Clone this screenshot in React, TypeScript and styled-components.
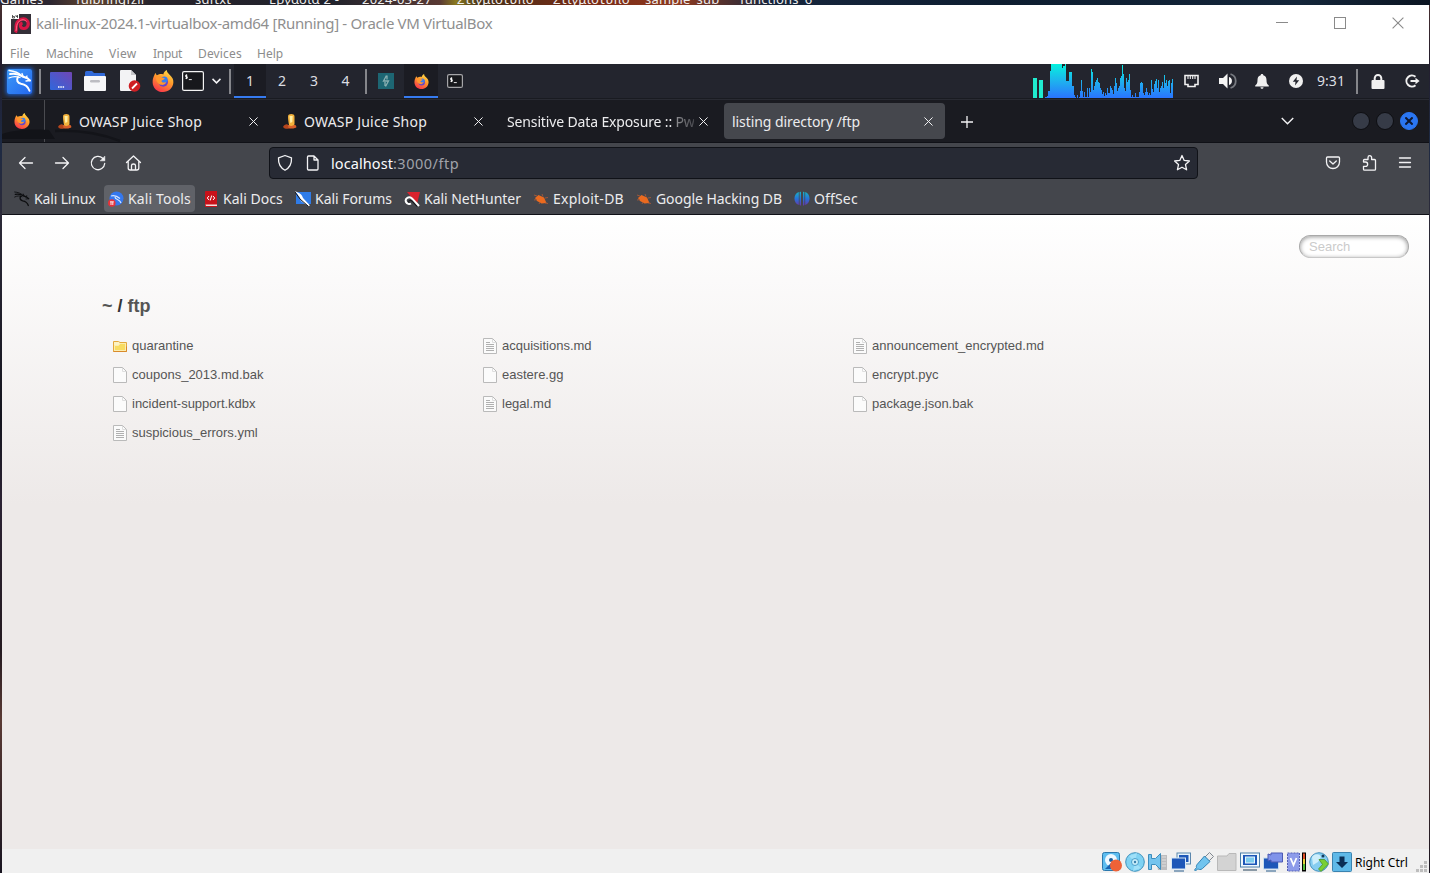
import React from 'react';
import styled, { createGlobalStyle, css } from 'styled-components';

const Global = createGlobalStyle`
  * { box-sizing: border-box; }
  html, body { margin: 0; height: 873px; overflow: hidden; }
  body { font-family: "Noto Sans", sans-serif; }
  svg { display: block; flex: none; }
`;

/* ---------- host desktop and window ---------- */

const Desktop = styled.div`
  position: relative;
  width: 1430px;
  height: 873px;
  padding: 5px 1px 0 2px;
  overflow: hidden;
  background:
    linear-gradient(90deg, #2c2630 0 50px, #62452f 90px, #27232b 150px, #20222c 330px, #5a3a34 440px, #8a7a20 456px, #463018 480px, #7a2b16 590px, #8d3a20 680px, #17263d 770px, #0d1d30 1000px, #14263a 1300px, #0b1522 1430px) 0 0 / 1430px 5px no-repeat,
    linear-gradient(180deg, #4a3030 0, #241d2c 60px, #1d2a44 140px, #2c2a38 220px, #14141e 420px, #2b2233 500px, #241a20 650px, #5a3a34 720px, #181420 873px);
`;

const DesktopLabel = styled.span<{ $x: number }>`
  position: absolute;
  top: -9px;
  left: ${p => p.$x}px;
  font-size: 13px;
  line-height: 17px;
  letter-spacing: 0.2px;
  white-space: nowrap;
  color: #eeeeee;
`;

const Window = styled.div`
  position: relative;
  display: flex;
  flex-direction: column;
  height: 868px;
  background: #ffffff;
`;

const TitleBar = styled.header`
  display: flex;
  align-items: center;
  height: 37px;
  padding-left: 9px;
`;

const WindowTitle = styled.h1`
  flex: 1;
  margin: 0 0 1px 5px;
  font-size: 15px;
  font-weight: 400;
  letter-spacing: -0.33px;
  color: #8f8f8f;
`;

const CaptionButtons = styled.div`
  display: flex;
  gap: 46px;
  padding: 0 25px 1px 0;
`;

const MenuBar = styled.nav`
  display: flex;
  height: 22px;
  padding-left: 8px;
  font-size: 12px;
  line-height: 24px;
  color: #8c8c8c;
`;

const MenuItem = styled.span<{ $w: number; $track?: number }>`
  width: ${p => p.$w}px;
  letter-spacing: ${p => p.$track ?? 0}px;
`;

/* ---------- guest panel ---------- */

const Panel = styled.div`
  display: flex;
  align-items: stretch;
  height: 35px;
  background: #23252e;
  border-bottom: 1px solid #191b21;
`;

const Cell = styled.div<{ $w: number; $active?: boolean; $text?: boolean }>`
  display: flex;
  align-items: center;
  justify-content: center;
  width: ${p => p.$w}px;
  padding-bottom: ${p => (p.$text ? 2 : 0)}px;
  font-size: 14px;
  color: #dcdee2;
  ${p => p.$active && css`
    background: #1b1c23;
    box-shadow: inset 0 -2px 0 #367bf0;
  `}
`;

const PanelSeparator = styled.i<{ $l?: number; $r?: number }>`
  width: 2px;
  height: 25px;
  margin: 5px ${p => p.$r ?? 0}px 0 ${p => p.$l ?? 0}px;
  background: #85868b;
`;

const Spacer = styled.div`
  flex: 1;
`;

/* ---------- browser chrome ---------- */

const TabStrip = styled.div`
  position: relative;
  display: flex;
  align-items: center;
  height: 44px;
  padding-bottom: 1px;
  background: #1a1b21;
  border-top: 1px solid #292b33;
  border-bottom: 1px solid #101117;
`;

const StripShade = styled.svg`
  position: absolute;
  left: 0;
  bottom: 0;
`;

const PinnedTab = styled.div`
  display: flex;
  align-items: center;
  justify-content: center;
  align-self: stretch;
  width: 43px;
  margin-right: 4px;
  margin-bottom: -1px;
  padding-right: 2px;
  border-right: 1px solid #4a4b50;
`;

const TabBox = styled.div<{ $active?: boolean }>`
  display: flex;
  align-items: center;
  width: 221px;
  height: 36px;
  margin-right: 4px;
  padding: 2px 12px 0 8px;
  gap: 5px;
  border-radius: 4px;
  font-size: 14px;
  color: #ececee;
  ${p => p.$active && css`background: #45474d;`}
`;

const TabTitle = styled.span<{ $track?: number; $fade?: boolean }>`
  flex: 1;
  min-width: 0;
  overflow: hidden;
  white-space: nowrap;
  letter-spacing: ${p => p.$track ?? 0}px;
  ${p => p.$fade && css`
    mask-image: linear-gradient(90deg, #000 165px, rgba(0, 0, 0, 0.55) 169px, rgba(0, 0, 0, 0.15) 191px);
  `}
`;

const TabIcon = styled.span`
  width: 17px;
  padding: 0 0 2px 1px;
`;

const NewTab = styled.button`
  display: grid;
  place-items: center;
  width: 34px;
  height: 34px;
  padding: 2px 0 0 2px;
  border: 0;
  background: none;
`;

const TabListButton = styled.span`
  padding-top: 1px;
`;

const WindowDots = styled.div`
  display: flex;
  gap: 6px;
  margin: 0 11px 0 58px;
`;

const Dot = styled.span<{ $close?: boolean }>`
  display: grid;
  place-items: center;
  width: 18px;
  height: 18px;
  border-radius: 50%;
  background: ${p => (p.$close ? '#2a76f2' : '#363b47')};
  border: 1px solid ${p => (p.$close ? '#2a76f2' : '#0d0e12')};
`;

const NavBar = styled.div`
  display: flex;
  align-items: center;
  height: 40px;
  padding: 0 14px;
  background: #44464c;
`;

const NavButtons = styled.div`
  display: flex;
  gap: 16px;
  width: 253px;
`;

const UrlField = styled.div`
  display: flex;
  align-items: center;
  width: 929px;
  height: 32px;
  padding: 0 5px;
  gap: 8px;
  border: 1px solid #101218;
  border-radius: 4px;
  background: #272a34;
`;

const UrlText = styled.span`
  flex: 1;
  font-size: 14.5px;
  color: #fbfbfe;
`;

const UrlHost = styled.span`
  letter-spacing: 0.08px;
`;

const UrlPath = styled.span`
  letter-spacing: 0.5px;
  color: #a0a2a9;
`;

const NavTools = styled.div`
  display: flex;
  gap: 16px;
  margin-left: auto;
`;

const Bookmarks = styled.div`
  display: flex;
  align-items: flex-start;
  gap: 4px;
  height: 32px;
  padding: 2px 8px 0;
  background: #44464c;
  border-bottom: 1px solid #101117;
`;

const Bookmark = styled.a<{ $w: number; $track?: number; $hover?: boolean }>`
  display: flex;
  align-items: center;
  gap: 4px;
  width: ${p => p.$w}px;
  height: 27px;
  padding-left: 4px;
  border-radius: 4px;
  white-space: nowrap;
  font-size: 14px;
  letter-spacing: ${p => p.$track ?? 0}px;
  color: #ececee;
  background: ${p => (p.$hover ? '#606268' : 'transparent')};
`;

/* ---------- directory listing page ---------- */

const Page = styled.main`
  position: relative;
  flex: 1;
  padding: 79px 100px;
  font: 13px "Liberation Sans", Arial, sans-serif;
  color: #555555;
  background: #ede9e8 linear-gradient(180deg, #ffffff, #ede9e8) 0 0 / 100% 290px no-repeat;
`;

const SearchField = styled.input`
  position: absolute;
  top: 20px;
  right: 20px;
  width: 110px;
  height: 23px;
  padding: 0 9px;
  border: 1px solid #a9a9a9;
  border-bottom-color: #c8c8c8;
  border-radius: 12px;
  font: inherit;
  background: #ffffff;
  box-shadow: inset 0 1px 4px rgba(0, 0, 0, 0.4);
  &::placeholder { color: #cbcbcb; opacity: 1; }
`;

const Path = styled.h2`
  margin: 0;
  font-size: 18px;
  line-height: 24px;
  color: #343434;
`;

const Crumb = styled.a`
  color: #555555;
`;

const FileGrid = styled.ul`
  display: grid;
  grid-template-columns: repeat(3, 370px);
  grid-auto-rows: 29px;
  margin: 13px 0 0;
  padding: 0 0 0 10px;
  list-style: none;
`;

const FileRow = styled.li`
  display: flex;
  align-items: center;
  gap: 4px;
`;

/* ---------- status bar ---------- */

const StatusBar = styled.footer`
  display: flex;
  align-items: center;
  justify-content: flex-end;
  height: 24px;
  padding: 2px 1px 0 0;
  gap: 3px;
  font-size: 12px;
  color: #000000;
  background: #f0f0f0;
`;

const HostKey = styled.span`
  width: 58px;
`;

const ResizeGrip = styled.svg`
  align-self: flex-end;
`;

/* ---------- icons ---------- */

const Firefox = ({ size }: { size: number }) => (
  <svg width={size} height={size} viewBox="0 0 24 24">
    <defs>
      <linearGradient id="ffFlame" x1="0.8" y1="0" x2="0.3" y2="1">
        <stop offset="0" stopColor="#ffe14a" />
        <stop offset="0.45" stopColor="#ff9a2b" />
        <stop offset="1" stopColor="#f8354b" />
      </linearGradient>
    </defs>
    <path fill="url(#ffFlame)" d="M2.6 5.4c.4-.9.8-1.500 1.500-2 .1 1 .5 1.700 1.200 2.400C8 4.200 10.500 4 12.300 4.800 12.800 2.700 14.200 1 16.200 0c-.2 2.200 1.300 3.400 3 5.200C22.300 8 23.600 10.500 23.300 14 22.700 20 18 24 12 24 5.600 24 .9 19.500.7 13.500.6 10.300 1.400 7.800 2.600 5.400z" />
    <circle cx="12.300" cy="13" r="5.200" fill="#6845c9" />
    <circle cx="13.500" cy="10.600" r="3.500" fill="#367ff0" />
    <path fill="#ff982e" d="M4.500 7.500c2.500-1.500 5-.8 6.500.8l3 .6c-.4 1.500-1.900 1.700-3 2.300-.9.500-.7 1.700.3 2.100 1.400.7 2.700-.3 4.200 0-1 2.200-3.300 3.400-5.700 2.800C6.300 15.200 4 11.800 4.500 7.500z" />
  </svg>
);

const Juice = () => (
  <svg width="14" height="16" viewBox="0 0 14 16">
    <path fill="#b6451c" d="M0 14c1-2 3-3 4.500-2.500L8 15l-3 .8c-2 .2-4-.3-5-1.800z" />
    <path fill="#d9602a" d="M5 12h7.500l1 2c-1 1.500-5 2-8 1z" />
    <path fill="#f3b23c" d="M5 3.500c0-3.200 6.500-3.200 6.500 0v8c-1.500 1.500-4 2-5.500.5C5.500 9 5 6 5 3.500z" />
    <path fill="#fff0a5" d="M6.500 3h3.200l-.4 6-2 1z" />
  </svg>
);

const Cross = ({ size = 9, color = '#f3f3f5', width = 1.1 }: { size?: number; color?: string; width?: number }) => (
  <svg width={size} height={size} viewBox="0 0 10 10" stroke={color} strokeWidth={width}>
    <path d="M.5.5l9 9M9.500.5l-9 9" />
  </svg>
);

const Dragon = ({ size, color }: { size: number; color: string }) => (
  <svg width={size} height={size} viewBox="0 0 24 24" fill="none" stroke={color} strokeLinecap="round">
    <path strokeWidth="2" d="M2 5c5-1 9 0 12.500 2.500L19 9l3 2.500M10 8c-2 3-.5 6 3 6.700 4 .6 7 2.500 8.500 7" />
    <path strokeWidth="1.300" d="M1 1.500C6 2 10 3 14 7M1 9c4-2 7-2 11-.5M15 7l-1-2.500M18 9l1-2M22 11.500l-4 .5" />
  </svg>
);

const KaliMenuTile = styled.span`
  display: grid;
  place-items: center;
  width: 25px;
  height: 25px;
  border-radius: 2px;
  background: linear-gradient(135deg, #3c9af8, #2467ee);
  box-shadow: 0 0 4px 1px #1c63d8;
`;

const GuestOs = () => (
  <svg width="20" height="20" viewBox="0 0 20 20">
    <rect width="20" height="20" fill="#342f38" />
    <path d="M4.500 18.500c1.500-2.500 0-5 1-8.500C7 5.500 13 3 16 6.500c2.500 3 1 7.500-3 8-4 .3-5-4.500-1.500-5.500" fill="none" stroke="#d81545" strokeWidth="3.200" />
    <path d="M5 17c.8-3 .3-5 1.500-7.500C8.500 5.500 13 4.500 15.500 7.500" fill="none" stroke="#ff6a86" strokeWidth="1" />
    <rect width="8" height="5" fill="#ffffff" />
    <path d="M1.500 1v3h2v-1.500h-2M5 1v1.500h2M6.500 1v3" stroke="#3a3a3a" strokeWidth=".8" fill="none" />
  </svg>
);

const DesktopIcon = () => (
  <svg width="22" height="18" viewBox="0 0 22 18">
    <defs>
      <linearGradient id="desk" x1="0" y1="1" x2="1" y2="0">
        <stop offset="0" stopColor="#2f67dc" />
        <stop offset="1" stopColor="#7146b5" />
      </linearGradient>
    </defs>
    <rect width="22" height="18" rx="1" fill="url(#desk)" />
    <path d="M8 15h1.500M10.300 15h1.500M12.600 15h1.500" stroke="#ffffff" strokeWidth="1.300" />
  </svg>
);

const FolderIcon = () => (
  <svg width="22" height="20" viewBox="0 0 22 20">
    <path d="M1 1.500Q1 0 2.500 0H8l2 2h10q1 0 1 1v5H1z" fill="#3069d8" />
    <rect y="5" width="22" height="15" rx="1" fill="#f6f6f8" />
    <rect x="6" y="9" width="10" height="2.500" rx="1.200" fill="#bcbcc2" />
  </svg>
);

const EditorIcon = () => (
  <svg width="22" height="22" viewBox="0 0 22 22">
    <path d="M1 1q0-1 1-1h10l5 5v16H2q-1 0-1-1z" fill="#f3f3f5" />
    <path d="M12 0l5 5h-5z" fill="#c6c6ca" />
    <circle cx="15.500" cy="16" r="5.800" fill="#cf1f24" />
    <path d="M13 18.500l5-5" stroke="#ffffff" strokeWidth="1.800" />
  </svg>
);

const Terminal = ({ w, h, stroke }: { w: number; h: number; stroke: string }) => (
  <svg width={w} height={h} viewBox={`0 0 ${w} ${h}`}>
    <rect x=".6" y=".6" width={w - 1.2} height={h - 1.2} rx="1.500" fill="#17181c" stroke={stroke} strokeWidth="1.200" />
    <path d="M5.300 4.200H3.600v1.500h1.700v1.600H3.400M4.500 3.400v4.700M6.800 8.600h3" fill="none" stroke="#ffffff" strokeWidth=".9" />
  </svg>
);

const Chevron = ({ w, h, sw = 1.5 }: { w: number; h: number; sw?: number }) => (
  <svg width={w} height={h} viewBox="0 0 12 7" fill="none" stroke="#f3f3f5" strokeWidth={sw}>
    <path d="M.7.7L6 6 11.300.7" />
  </svg>
);

const Burp = () => (
  <svg width="16" height="16" viewBox="0 0 16 16">
    <rect width="16" height="16" fill="#1d6673" />
    <path d="M8.500 2.500L5.500 8h5L7.500 13.500M9 2.500v4M7 9v4" fill="none" stroke="#8ab0b2" strokeWidth="1.300" />
  </svg>
);

const LOAD = [
  1, 1, 2, 7, 7, 27, 34, 34, 34, 34, 34, 34, 34, 34, 34, 34, 34, 30, 32, 32, 34, 17, 17, 17, 26, 26, 26, 12, 12, 3, 1, 0,
  3, 0, 1, 7, 18, 7, 1, 6, 1, 1, 10, 1, 10, 6, 29, 26, 8, 12, 16, 18, 20, 16, 15, 10, 8, 4, 6, 2, 5, 3, 10, 5,
  5, 12, 10, 8, 4, 12, 20, 15, 7, 10, 12, 20, 22, 33, 24, 10, 7, 20, 16, 18, 24, 8, 1, 3, 1, 1, 5, 1, 1, 1, 6, 15,
  16, 15, 5, 3, 6, 10, 6, 3, 5, 3, 18, 9, 6, 14, 17, 19, 10, 18, 6, 10, 12, 16, 10, 23, 15, 18, 12, 17, 18, 5, 15, 19,
];

const LoadGraph = () => (
  <svg width="140" height="34" viewBox="0 0 140 34">
    <defs>
      <linearGradient id="load" gradientUnits="userSpaceOnUse" x1="0" y1="0" x2="0" y2="34">
        <stop offset="0" stopColor="#06f2de" />
        <stop offset="0.5" stopColor="#1eb2ee" />
        <stop offset="1" stopColor="#2a74ff" />
      </linearGradient>
    </defs>
    <path d="M0 14h4v20H0zM6 16h4v18H6z" fill="#20eccf" />
    <path fill="url(#load)" d={LOAD.map((h, i) => `M${12 + i} 34v${-h}h1v${h}z`).join('')} />
  </svg>
);

const Network = () => (
  <svg width="15" height="14" viewBox="0 0 15 14" fill="none" stroke="#f0f0f0">
    <path strokeWidth="1.600" d="M1 1.500h13v9h-3v2H4v-2H1z" />
    <path strokeWidth="1.100" d="M4 1.500V5M6.300 1.500V5M8.700 1.500V5M11 1.500V5" />
  </svg>
);

const Speaker = () => (
  <svg width="18" height="16" viewBox="0 0 18 16">
    <path fill="#f5f5f5" d="M0 5h4l4.500-4.500v15L4 11H0z" />
    <path fill="#f5f5f5" d="M10 4a4.200 4.200 0 0 1 0 8z" />
    <path d="M11.500 1a7.300 7.300 0 0 1 0 14" fill="none" stroke="#777a80" strokeWidth="1.800" />
  </svg>
);

const Bell = () => (
  <svg width="14" height="15" viewBox="0 0 14 15" fill="#f0f0f0">
    <path d="M7 0c.8 0 1.300.5 1.300 1.300C10.800 2 11.500 4 11.500 6c0 3 .6 4.200 2.300 5.500v1H.2v-1C1.900 10.200 2.500 9 2.500 6c0-2 .7-4 3.200-4.700C5.700.5 6.200 0 7 0zM5.500 13.200h3c0 2-3 2-3 0z" />
  </svg>
);

const Power = () => (
  <svg width="14" height="14" viewBox="0 0 14 14">
    <circle cx="7" cy="7" r="7" fill="#f0f0f0" />
    <path d="M8 2.500L3.800 7.800h2.700L6 11.500l4.200-5.300H7.500z" fill="#23252e" />
  </svg>
);

const Lock = () => (
  <svg width="14" height="15" viewBox="0 0 14 15">
    <rect x=".5" y="6" width="13" height="9" rx="1" fill="#f0f0f0" />
    <path d="M3.700 7V4.300a3.300 3.300 0 0 1 6.600 0V7" fill="none" stroke="#f0f0f0" strokeWidth="2" />
  </svg>
);

const Logout = () => (
  <svg width="15" height="14" viewBox="0 0 15 14" fill="none" stroke="#f0f0f0" strokeWidth="2">
    <path d="M10.500 2.800A5.500 5.500 0 1 0 10.500 11.200M5.500 7h6" />
    <path d="M10.500 3.700L14.600 7l-4.100 3.300z" fill="#f0f0f0" stroke="none" />
  </svg>
);

const Line = styled.svg.attrs({ viewBox: '0 0 20 20' })`
  width: 20px;
  height: 20px;
  fill: none;
  stroke: #f3f3f5;
  stroke-width: 1.3;
  stroke-linecap: round;
  stroke-linejoin: round;
`;

const FileIcon = ({ text }: { text?: boolean }) => (
  <svg width="16" height="16" viewBox="0 0 16 16">
    <path d="M1.500.5h9l4 4v11h-13z" fill="#fbfbfb" stroke="#bababa" />
    <path d="M10.500 1v3.500H14" fill="none" stroke="#dedede" />
    {text && <path d="M4 4.500h4M4 6.500h8M4 8.500h8M4 10.500h8M4 12.500h8" stroke="#b0b0b0" />}
  </svg>
);

const YellowFolder = () => (
  <svg width="16" height="16" viewBox="0 0 16 16">
    <path d="M1.500 13.500v-10h5l1.500 1h6.500v9z" fill="#fdf3c4" stroke="#e3a83c" />
    <path d="M2.500 12.500v-5h4l1.500-2h5.500v7z" fill="#f8dc62" stroke="#fbedb0" />
    <path d="M1.500 13.500h13v-5" fill="none" stroke="#d98a2b" />
  </svg>
);

/* ---------- data ---------- */

const DESKTOP_LABELS: [number, string][] = [
  [0, 'Games'], [76, 'fulbringfzir'], [195, 'sdftxt'], [269, 'Εργασία 2 -'], [362, '2024-03-27'],
  [457, 'Στιγμιότυπο'], [553, 'Στιγμιότυπο'], [645, 'sample_sub'], [740, 'functions_6'],
];

const MENUS: [string, number, number][] = [
  ['File', 36, 0.2], ['Machine', 63, -0.15], ['View', 44, 0.35], ['Input', 45, -0.3], ['Devices', 59, 0.15], ['Help', 40, 0],
];

const FILES: [string, 'dir' | 'text' | 'plain'][] = [
  ['quarantine', 'dir'], ['acquisitions.md', 'text'], ['announcement_encrypted.md', 'text'],
  ['coupons_2013.md.bak', 'plain'], ['eastere.gg', 'plain'], ['encrypt.pyc', 'plain'],
  ['incident-support.kdbx', 'plain'], ['legal.md', 'text'], ['package.json.bak', 'plain'],
  ['suspicious_errors.yml', 'text'],
];

const Bug = () => (
  <svg width="16" height="16" viewBox="0 0 16 16">
    <path d="M2 7l3.500-3 5.500 2.500L13.500 12l-5 .5L4 10z" fill="#ea6a1f" />
    <path d="M1 4l3 1M1 9l3-.5M6 13l1-2M9 3l1 2.500M12 7l3-.5M12 12l3 .5" stroke="#a5593a" strokeWidth=".9" />
  </svg>
);

const BOOKMARKS: { label: string; w: number; track: number; hover?: boolean; icon: React.ReactNode }[] = [
  { label: 'Kali Linux', w: 90, track: -0.15, icon: <Dragon size={16} color="#0d0e10" /> },
  {
    label: 'Kali Tools', w: 91, track: 0.14, hover: true, icon: (
      <svg width="16" height="16" viewBox="0 0 16 16">
        <circle cx="8.500" cy="7.500" r="7" fill="#3478ef" />
        <path d="M3 5c4-1 6 0 9 2.500M7 6c0 3 5 2 6 6" fill="none" stroke="#d8e6ff" strokeWidth="1.200" />
        <circle cx="3.800" cy="12" r="3.800" fill="#e5333b" />
        <path d="M2 10.800h3.800M3 11v3M4.800 11v3" stroke="#fff" strokeWidth=".9" />
      </svg>
    ),
  },
  {
    label: 'Kali Docs', w: 88, track: 0.02, icon: (
      <svg width="16" height="16" viewBox="0 0 16 16">
        <path d="M2 1q0-1 1-1h11v16H2z" fill="#c8121a" />
        <path d="M2.500 13.500H14v1.500H3z" fill="#f4dede" />
        <path d="M6 5L4.300 7 6 9M10 5l1.700 2-1.700 2M8.700 4.500l-1.500 5" fill="none" stroke="#fff" strokeWidth="1" />
      </svg>
    ),
  },
  {
    label: 'Kali Forums', w: 105, track: -0.04, icon: (
      <svg width="16" height="16" viewBox="0 0 16 16">
        <path d="M1 1h15v12H1z" fill="#2f7ce8" />
        <path d="M0 0c4 2 7 3 8 7l7 7.500-2 .5-7-5-1.500-4z" fill="#ffffff" />
        <path d="M0 1l5 7 8 7" fill="none" stroke="#15171c" strokeWidth="1" />
      </svg>
    ),
  },
  {
    label: 'Kali NetHunter', w: 125, track: -0.03, icon: (
      <svg width="16" height="16" viewBox="0 0 16 16">
        <path d="M3 1h13l-3 12z" fill="#d9232e" />
        <path d="M15 15L8 7.500C5 5 .5 7 2 11c1 2 3.500 2.500 5 1.500" fill="none" stroke="#ffffff" strokeWidth="2" />
        <path d="M13 15.500L8 10c-2-1.500-4 0-3 1.500" fill="none" stroke="#14161a" strokeWidth="1.100" />
      </svg>
    ),
  },
  { label: 'Exploit-DB', w: 99, track: 0.26, icon: <Bug /> },
  { label: 'Google Hacking DB', w: 154, track: -0.07, icon: <Bug /> },
  {
    label: 'OffSec', w: 72, track: 0.15, icon: (
      <svg width="16" height="16" viewBox="0 0 16 16">
        <defs>
          <linearGradient id="off" x1="0" y1="0" x2="0" y2="1">
            <stop offset="0" stopColor="#18b3c4" />
            <stop offset=".5" stopColor="#2672d8" />
            <stop offset="1" stopColor="#6a35a8" />
          </linearGradient>
        </defs>
        <path fill="url(#off)" d="M4.800 1v13C-1 12-1 3 4.800 1zM5.600 1l1.400-.2v14L5.600 14zM9 .8l1.400.2v13L9 14.800zM11.200 1v13c5.800-2 5.800-11 0-13z" />
      </svg>
    ),
  },
];

const STATUS_ICONS: React.ReactNode[] = [
  <svg width="20" height="20" viewBox="0 0 20 20">
    <rect x=".5" y=".5" width="17" height="18" rx="2" fill="#5dbdf0" stroke="#2b78ad" />
    <circle cx="9" cy="8" r="6" fill="#eef8ff" /><circle cx="9" cy="8" r="2" fill="#1a5f9d" />
    <path d="M3 17l6-6v6z" fill="#1a62b0" /><circle cx="14" cy="13.500" r="6" fill="#ee6238" />
  </svg>,
  <svg width="20" height="20" viewBox="0 0 20 20">
    <circle cx="10" cy="10" r="9.300" fill="#7fd2f3" stroke="#3f92bd" />
    <path d="M4 4l6 6 2-9zM16 16l-6-6-2 9z" fill="#a0e0f8" />
    <circle cx="10" cy="10" r="3.500" fill="#c8edf9" stroke="#4a9fcb" /><circle cx="10" cy="10" r="1.200" fill="#3a7fae" />
  </svg>,
  <svg width="20" height="20" viewBox="0 0 20 20">
    <path d="M9 13q0-2 2-2V3h8v15H10z" fill="#bdbdbf" /><path d="M14 5h4M14 8h4M14 11h4M14 14h4" stroke="#e0e0e0" />
    <path d="M.5 2.500h3v4h4l5-5v16l-5-5h-4v5h-3z" fill="#75c4ee" stroke="#3d8dbd" />
  </svg>,
  <svg width="20" height="20" viewBox="0 0 20 20">
    <rect x="6" y="1" width="13.500" height="11" fill="#e5f2fa" stroke="#5b87ad" /><rect x="8" y="3" width="9.500" height="7" fill="#1d57b8" />
    <rect x=".5" y="6" width="14" height="11" fill="#1d57b8" stroke="#d5e7f6" /><path d="M3 19h10" stroke="#6a8cad" strokeWidth="1.500" />
  </svg>,
  <svg width="20" height="20" viewBox="0 0 20 20">
    <path d="M11 5l4.500-4.500 4 4L15 9z" fill="#ececec" stroke="#808890" />
    <path d="M3.500 12L10.500 4l5.500 5.500-7.500 7c-2 2-4 .5-5 .5L1.500 19 .5 18l2-2.500c-.5-1 0-2.500 1-3.500z" fill="#71c4ee" stroke="#3383b5" />
  </svg>,
  <svg width="20" height="20" viewBox="0 0 20 20">
    <path d="M.5 18.500V4H10l2-2.500h7v17z" fill="#d3d3d3" stroke="#b9b9b9" />
  </svg>,
  <svg width="20" height="20" viewBox="0 0 20 20">
    <rect x=".5" y="1" width="19" height="14" fill="#f0f8fd" stroke="#4c7fa8" /><rect x="3" y="3" width="14" height="10" fill="#1d57b8" />
    <rect x="5.500" y="5" width="9" height="6" fill="#7ccbee" stroke="#e5f4fc" /><path d="M3 18h14" stroke="#8a99a5" strokeWidth="2" />
  </svg>,
  <svg width="20" height="20" viewBox="0 0 20 20">
    <rect x=".5" y="6" width="15" height="11" fill="#1d57b8" stroke="#c9dff0" /><path d="M3 19h10" stroke="#6a8cad" strokeWidth="1.500" />
    <path d="M5 2l3 1V1h11.500v9H8V8L5 9z" fill="#7f93ea" stroke="#4c5ab4" />
  </svg>,
];

export default function App() {
  return (
    <Desktop>
      <Global />
      {DESKTOP_LABELS.map(([x, t]) => <DesktopLabel key={x} $x={x}>{t}</DesktopLabel>)}
      <Window>
        <TitleBar>
          <GuestOs />
          <WindowTitle>kali-linux-2024.1-virtualbox-amd64 [Running] - Oracle VM VirtualBox</WindowTitle>
          <CaptionButtons>
            <svg width="12" height="12" stroke="#8a8a8a"><path d="M0 5.500h12" /></svg>
            <svg width="12" height="12" stroke="#8a8a8a" fill="none"><rect x=".5" y=".5" width="11" height="11" /></svg>
            <Cross size={12} color="#8a8a8a" width={0.9} />
          </CaptionButtons>
        </TitleBar>
        <MenuBar>
          {MENUS.map(([t, w, track]) => <MenuItem key={t} $w={w} $track={track}>{t}</MenuItem>)}
        </MenuBar>

        <Panel>
          <Cell $w={35}><KaliMenuTile><Dragon size={24} color="#ffffff" /></KaliMenuTile></Cell>
          <PanelSeparator $l={2} $r={3} />
          <Cell $w={34}><DesktopIcon /></Cell>
          <Cell $w={34}><FolderIcon /></Cell>
          <Cell $w={35}><EditorIcon /></Cell>
          <Cell $w={32}><Firefox size={22} /></Cell>
          <Cell $w={28}><Terminal w={22} h={20} stroke="#f4f4f4" /></Cell>
          <Cell $w={18}><Chevron w={9} h={6} sw={2} /></Cell>
          <PanelSeparator $l={4} $r={3} />
          <Cell $w={32} $active $text>1</Cell>
          <Cell $w={32} $text>2</Cell>
          <Cell $w={32} $text>3</Cell>
          <Cell $w={31} $text>4</Cell>
          <PanelSeparator $l={4} $r={3} />
          <Cell $w={32}><Burp /></Cell>
          <Spacer as="span" hidden />
          <PanelGap />
          <Cell $w={34} $active><Firefox size={15} /></Cell>
          <Cell $w={34}><Terminal w={16} h={14} stroke="#a5a5a8" /></Cell>
          <Spacer />
          <LoadGraph />
          <Cell $w={37}><Network /></Cell>
          <Cell $w={36}><Speaker /></Cell>
          <Cell $w={32}><Bell /></Cell>
          <Cell $w={35}><Power /></Cell>
          <Cell $w={36} $text>9:31</Cell>
          <PanelSeparator $l={7} $r={2} />
          <Cell $w={35}><Lock /></Cell>
          <Cell $w={34}><Logout /></Cell>
        </Panel>

        <TabStrip>
          <StripShade width="124" height="14" viewBox="0 0 124 14">
            <path d="M0 6C15 1 35 1 47 2l6 9H0z" fill="#121318" />
            <path d="M53 3C80 2 100 6 118 13" fill="none" stroke="#131419" strokeWidth="2.500" />
          </StripShade>
          <PinnedTab><Firefox size={16} /></PinnedTab>
          {['first', 'second'].map(id => (
            <TabBox key={id}>
              <TabIcon><Juice /></TabIcon>
              <TabTitle $track={0.2}>OWASP Juice Shop</TabTitle>
              <Cross />
            </TabBox>
          ))}
          <TabBox>
            <TabTitle $track={-0.14} $fade>Sensitive Data Exposure :: Pwn</TabTitle>
            <Cross />
          </TabBox>
          <TabBox $active>
            <TabTitle $track={-0.07}>listing directory /ftp</TabTitle>
            <Cross />
          </TabBox>
          <NewTab>
            <svg width="12" height="12" stroke="#f3f3f5" strokeWidth="1.300"><path d="M0 6h12M6 0v12" /></svg>
          </NewTab>
          <Spacer />
          <TabListButton><Chevron w={13} h={8} sw={1.3} /></TabListButton>
          <WindowDots>
            <Dot /><Dot /><Dot $close><Cross size={8} color="#0f1830" width={2.5} /></Dot>
          </WindowDots>
        </TabStrip>

        <NavBar>
          <NavButtons>
            <Line><path d="M3.500 10h13M9 4.500L3.500 10 9 15.500" /></Line>
            <Line><path d="M16.500 10h-13M11 4.500l5.500 5.500-5.500 5.500" /></Line>
            <Line><path d="M16.700 10.500a6.700 6.700 0 1 1-2-5.300L16 6.500" /><path d="M16.800 3.500v4.300h-4.300z" fill="#f3f3f5" strokeWidth=".6" /></Line>
            <Line><path d="M2.500 9.500L9.500 3l7 6.500M4.200 8.500V15q0 2 2 2h6.600q2 0 2-2V8.500M7.500 17v-4.500q0-1.500 2-1.500t2 1.500V17" /></Line>
          </NavButtons>
          <UrlField>
            <Line><path d="M10 2.500l6.500 2.300c.3 5.500-1.800 10-6.500 12.500C5.300 14.800 3.200 10.300 3.500 4.800z" /></Line>
            <Line><path d="M4.500 4q0-1 1-1H11l4 4v9q0 1-1 1H5.500q-1 0-1-1zM11 3v4h4" /></Line>
            <UrlText><UrlHost>localhost</UrlHost><UrlPath>:3000/ftp</UrlPath></UrlText>
            <Line><path d="M10 2.500l2.200 4.900 5.200.6-3.900 3.600 1.100 5.200-4.600-2.600-4.600 2.600 1.100-5.200L2.600 8l5.200-.6z" /></Line>
          </UrlField>
          <NavTools>
            <Line><path d="M4.500 4h11q1 0 1 1v4c0 4-3 6.500-6.500 6.500S3.500 13 3.500 9V5q0-1 1-1zM6.700 8L10 11l3.300-3" /></Line>
            <Line><path d="M4.500 9V7.500q0-1 1-1H9V4.500a1.800 1.800 0 0 1 3.600 0v2H15.500q1 0 1 1v8.700q0 1-1 1H5.500q-1 0-1-1v-2.900h2a2.100 2.100 0 0 0 0-4.300z" /></Line>
            <Line><path d="M4.500 5h11M4.500 9.500h11M4.500 14h11" /></Line>
          </NavTools>
        </NavBar>

        <Bookmarks>
          {BOOKMARKS.map(b => (
            <Bookmark key={b.label} $w={b.w} $track={b.track} $hover={b.hover}>{b.icon}{b.label}</Bookmark>
          ))}
        </Bookmarks>

        <Page>
          <SearchField placeholder="Search" />
          <Path><Crumb>~</Crumb> / <Crumb>ftp</Crumb></Path>
          <FileGrid>
            {FILES.map(([name, kind]) => (
              <FileRow key={name}>
                {kind === 'dir' ? <YellowFolder /> : <FileIcon text={kind === 'text'} />}
                {name}
              </FileRow>
            ))}
          </FileGrid>
        </Page>

        <StatusBar>
          {STATUS_ICONS.map((icon, i) => <React.Fragment key={i}>{icon}</React.Fragment>)}
          <svg width="20" height="20" viewBox="0 0 20 20">
            <rect x="1.500" y="1" width="12" height="18" fill="#8d9bea" stroke="#5560b5" strokeDasharray="2 1" />
            <path d="M4.500 6l3 7 3-7" fill="none" stroke="#ffffff" strokeWidth="1.800" />
            <rect x="16" y=".5" width="4" height="19" fill="#000" />
            <rect x="17" y="1.500" width="2" height="6" fill="#e0502a" /><rect x="17" y="7" width="2" height="5" fill="#e5d23a" /><rect x="17" y="12" width="2" height="6" fill="#56bb3e" />
          </svg>
          <svg width="20" height="20" viewBox="0 0 20 20">
            <circle cx="10" cy="10" r="9.300" fill="#86cdf0" stroke="#3f8fbd" />
            <path d="M3 5c3-4 8-3 9 0l-3 5-5 3z" fill="#cdeefb" />
            <path d="M10 7.500h5.500l4 4.500-7.500 7.500-2.500-2.500 4-4.500z" fill="#79cf35" stroke="#3f8a1c" strokeWidth=".7" /><circle cx="14" cy="4" r="1.500" fill="#173a5c" />
          </svg>
          <svg width="20" height="20" viewBox="0 0 20 20">
            <rect x=".5" y=".5" width="19" height="19" rx="1" fill="#5fb9e8" stroke="#3a83b0" />
            <path d="M7.500 4.500h5V10H16l-6 6-6-6h3.500z" fill="#0b2e55" />
          </svg>
          <HostKey>Right Ctrl</HostKey>
          <ResizeGrip width="12" height="12" viewBox="0 0 12 12" fill="#bdbdbd">
            <path d="M8 0h3v3H8zM4 4h3v3H4zM8 4h3v3H8zM0 8h3v3H0zM4 8h3v3H4zM8 8h3v3H8z" />
          </ResizeGrip>
        </StatusBar>
      </Window>
    </Desktop>
  );
}

const PanelGap = styled.span`
  width: 2px;
`;
